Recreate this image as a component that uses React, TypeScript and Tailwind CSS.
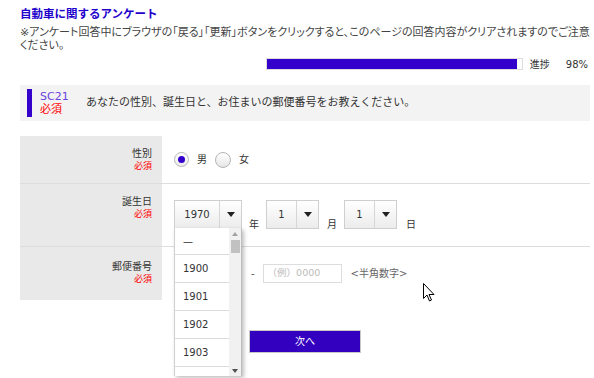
import React from 'react';

function Select({ value, width }: { value: string; width: string }) {
    return (
        <div className={`flex h-[29px] border border-[#cfcfcf] bg-gradient-to-b from-white to-[#ececec] ${width}`}>
            <div className="flex-1 flex items-center justify-center text-[10px] text-[#333] border-r border-[#d6d6d6]">{value}</div>
            <div className="w-[21px] flex items-center justify-center">
                <svg width="8" height="5" viewBox="0 0 8 5"><path d="M0 0h8L4 5z" fill="#222" /></svg>
            </div>
        </div>
    );
}

function Label({ text }: { text: string }) {
    return (
        <div className="text-right pr-[10px]">
            <div className="text-[10px] leading-[12px] text-[#333]">{text}</div>
            <div className="text-[9px] leading-[12px] text-[#ff0000]">必須</div>
        </div>
    );
}

function Dropdown() {
    const years = ['1900', '1901', '1902', '1903'];
    return (
        <div className="absolute left-0 top-[28px] w-[68px] h-[148px] flex bg-white border-l border-[#cfcfcf] border-r border-r-[#bdbdbd] shadow-[2px_2px_4px_rgba(0,0,0,0.25)] overflow-hidden z-10">
            <div className="flex-1">
                <div className="h-[27px] flex items-center pl-[8px] text-[10px] border-b border-[#dcdcdc]">—</div>
                {years.map(y => (
                    <div key={y} className="h-[28px] flex items-center pl-[8px] text-[10px] text-[#333] border-b border-[#dcdcdc]">{y}</div>
                ))}
                <div className="h-[28px]" />
            </div>
            <div className="w-[12px] bg-[#f1f1f1] flex flex-col items-center">
                <div className="h-[12px] flex items-center justify-center">
                    <svg width="6" height="4" viewBox="0 0 6 4"><path d="M0 4h6L3 0z" fill="#a3a3a3" /></svg>
                </div>
                <div className="w-[9px] h-[13px] bg-[#c1c1c1]" />
                <div className="flex-1" />
                <div className="h-[10px] flex items-center justify-center">
                    <svg width="6" height="4" viewBox="0 0 6 4"><path d="M0 0h6L3 4z" fill="#505050" /></svg>
                </div>
            </div>
        </div>
    );
}

export default function App() {
    return (
        <div className="relative w-[594px] h-[378px] overflow-hidden bg-white font-['DejaVu_Sans','Noto_Sans_CJK_JP',sans-serif] text-[#333]">
            <div className="pl-[20px] pr-[4px] pt-[7px]">
                <h1 className="text-[11.5px] leading-[15px] font-bold text-[#2200cc]">自動車に関するアンケート</h1>
                <p className="mt-[4px] text-[11px] leading-[13px] text-[#444] [font-feature-settings:'palt']">
                    <span className="whitespace-nowrap">※アンケート回答中にブラウザの「戻る」「更新」ボタンをクリックすると、このページの回答内容がクリアされますのでご注意</span>
                    <br />ください。
                </p>
                <div className="mt-[6px] h-[12px] flex items-center justify-end">
                    <div className="w-[257px] h-[12px] border border-[#dddddd] bg-white">
                        <div className="w-[98%] h-full bg-[#3300cc]" />
                    </div>
                    <span className="ml-[7px] text-[10px] text-[#333]">進捗</span>
                    <span className="ml-[16px] mr-[2px] text-[10px] text-[#333]">98%</span>
                </div>

                <div className="mt-[15px] h-[36px] bg-[#f3f3f3] flex items-center">
                    <div className="ml-[7px] w-[5px] h-[28px] bg-[#3300cc]" />
                    <div className="ml-[8px] w-[46px]">
                        <div className="text-[11px] leading-[13px] text-[#6a44dd]">SC21</div>
                        <div className="text-[11px] leading-[14px] text-[#ff0000]">必須</div>
                    </div>
                    <div className="text-[11px] text-[#333] mt-[1px]">あなたの性別、誕生日と、お住まいの郵便番号をお教えください。</div>
                </div>

                <div className="mt-[15px] grid grid-cols-[142px_1fr]">
                    <div className="h-[48px] pt-[12px] bg-[#e9e9e9] border-b border-[#dddddd]"><Label text="性別" /></div>
                    <div className="h-[48px] border-b border-[#dddddd] flex items-center pl-[12px] text-[10px]">
                        <span className="w-[15px] h-[15px] rounded-full border border-[#b5b5b5] bg-gradient-to-b from-white to-[#ececec] flex items-center justify-center">
                            <span className="w-[7px] h-[7px] rounded-full bg-[#3300cc]" />
                        </span>
                        <span className="ml-[8px]">男</span>
                        <span className="ml-[8px] w-[16px] h-[16px] rounded-full border border-[#b5b5b5] bg-gradient-to-b from-white to-[#e6e6e6]" />
                        <span className="ml-[8px]">女</span>
                    </div>

                    <div className="h-[63px] border-b border-[#dddddd] bg-[#e9e9e9] pt-[12px]"><Label text="誕生日" /></div>
                    <div className="h-[63px] border-b border-[#dddddd] flex items-end pl-[12px] pb-[17px] text-[10px] text-[#333]">
                        <div className="relative">
                            <Select value="1970" width="w-[68px]" />
                            <Dropdown />
                        </div>
                        <span className="ml-[7px] leading-[12px] mb-[-2px]">年</span>
                        <div className="ml-[7px]"><Select value="1" width="w-[53px]" /></div>
                        <span className="ml-[8px] leading-[12px] mb-[-2px]">月</span>
                        <div className="ml-[7px]"><Select value="1" width="w-[53px]" /></div>
                        <span className="ml-[9px] leading-[12px] mb-[-2px]">日</span>
                    </div>

                    <div className="h-[53px] bg-[#e9e9e9] pt-[14px]"><Label text="郵便番号" /></div>
                    <div className="h-[53px] flex items-center pl-[12px] text-[10px]">
                        <div className="w-[68px] h-[19px] border border-[#dddddd]" />
                        <span className="ml-[9px] text-[#555]">-</span>
                        <div className="ml-[8px] w-[79px] h-[19px] border border-[#dddddd] flex items-center pl-[4px] text-[#bbbbbb] text-[9.5px]">（例）0000</div>
                        <span className="ml-[9px] text-[#666] text-[10px]">&lt;半角数字&gt;</span>
                    </div>
                </div>

                <div className="mt-[30px] flex justify-center">
                    <button className="w-[112px] h-[23px] bg-[#3300c0] border border-[#c8c8c8] text-white text-[10px]">次へ</button>
                </div>
            </div>

            <svg className="absolute left-[423px] top-[283px]" width="12" height="19" viewBox="0 0 12 19">
                <path d="M0.5 0.5v15l3.5-3.5 2.5 6 2-1-2.5-5.5h5z" fill="#fff" stroke="#000" strokeWidth="1" strokeLinejoin="round" />
            </svg>
        </div>
    );
}
